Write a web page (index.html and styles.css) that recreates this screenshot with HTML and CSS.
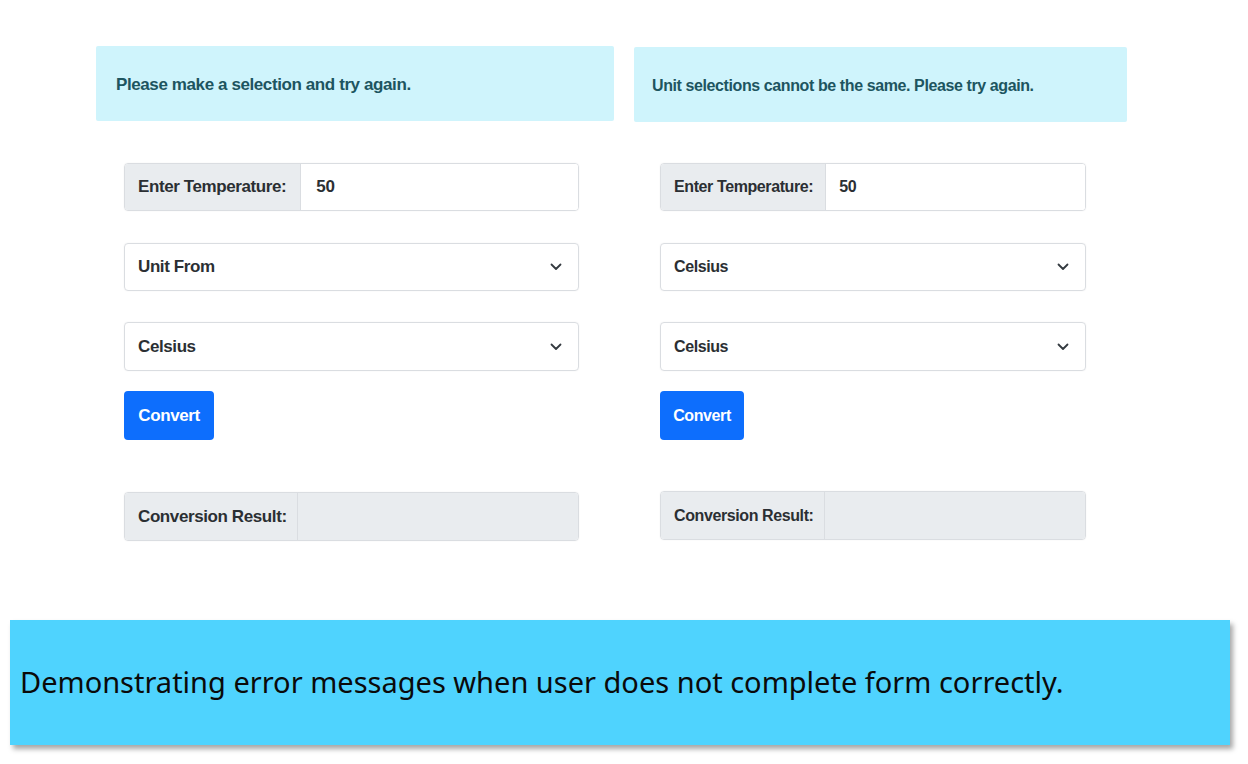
FILE: index.html
```html
<!DOCTYPE html>
<html lang="en">
<head>
<meta charset="utf-8">
<title>Temperature Converter Errors</title>
<link rel="stylesheet" href="styles.css">
</head>
<body>
<div class="page">
  <div class="panels">
    <section class="panel panel-left">
      <div class="alert">Please make a selection and try again.</div>
      <div class="form">
        <div class="group">
          <span class="group-label">Enter Temperature:</span>
          <span class="group-value">50</span>
        </div>
        <div class="select">
          <span>Unit From</span>
          <svg class="chev" width="12" height="8" viewBox="0 0 12 8"><polyline points="1.5,1.5 6,6 10.5,1.5" fill="none" stroke="#343a40" stroke-width="1.8" stroke-linecap="round" stroke-linejoin="round"/></svg>
        </div>
        <div class="select select-second">
          <span>Celsius</span>
          <svg class="chev" width="12" height="8" viewBox="0 0 12 8"><polyline points="1.5,1.5 6,6 10.5,1.5" fill="none" stroke="#343a40" stroke-width="1.8" stroke-linecap="round" stroke-linejoin="round"/></svg>
        </div>
        <button class="btn">Convert</button>
        <div class="group group-result">
          <span class="group-label">Conversion Result:</span>
          <span class="group-value readonly"></span>
        </div>
      </div>
    </section>
    <section class="panel panel-right">
      <div class="alert">Unit selections cannot be the same. Please try again.</div>
      <div class="form">
        <div class="group">
          <span class="group-label">Enter Temperature:</span>
          <span class="group-value">50</span>
        </div>
        <div class="select">
          <span>Celsius</span>
          <svg class="chev" width="12" height="8" viewBox="0 0 12 8"><polyline points="1.5,1.5 6,6 10.5,1.5" fill="none" stroke="#343a40" stroke-width="1.8" stroke-linecap="round" stroke-linejoin="round"/></svg>
        </div>
        <div class="select select-second">
          <span>Celsius</span>
          <svg class="chev" width="12" height="8" viewBox="0 0 12 8"><polyline points="1.5,1.5 6,6 10.5,1.5" fill="none" stroke="#343a40" stroke-width="1.8" stroke-linecap="round" stroke-linejoin="round"/></svg>
        </div>
        <button class="btn">Convert</button>
        <div class="group group-result">
          <span class="group-label">Conversion Result:</span>
          <span class="group-value readonly"></span>
        </div>
      </div>
    </section>
  </div>
  <div class="caption">Demonstrating error messages when user does not complete form correctly.</div>
</div>
</body>
</html>
```

FILE: styles.css
```css
* { box-sizing: border-box; }
html, body { margin: 0; padding: 0; background: #ffffff; }
body {
  width: 1248px;
  height: 764px;
  overflow: hidden;
  font-family: "Liberation Sans", Arial, sans-serif;
}
.page {
  display: flex;
  flex-direction: column;
  padding-top: 46px;
}
.panels {
  display: flex;
  padding-left: 96px;
  gap: 20px;
}
.panel { display: flex; flex-direction: column; }
.panel-left { width: 518px; font-size: 17px; }
.panel-right { width: 493px; font-size: 16px; }
.alert {
  height: 75px;
  background: #cff4fc;
  color: #1d5560;
  font-weight: bold;
  letter-spacing: -0.4px;
  display: flex;
  align-items: center;
  padding-left: 20px;
  padding-top: 2px;
  border-radius: 2px;
}
.panel-right .alert { padding-left: 18px; margin-top: 1px; }
.form {
  display: flex;
  flex-direction: column;
  margin-top: 42px;
  color: #2b2f33;
  font-weight: bold;
  letter-spacing: -0.4px;
}
.panel-left .form { margin-left: 28px; width: 455px; }
.panel-right .form { margin-left: 26px; width: 426px; margin-top: 41px; }
.group {
  display: flex;
  height: 48px;
  border: 1px solid #dadde1;
  border-radius: 4px;
  overflow: hidden;
  box-shadow: 0 0 2px rgba(0,0,0,0.06);
}
.group-label {
  background: #e9ecef;
  display: flex;
  align-items: center;
  padding: 0 14px 0 13px;
  border-right: 1px solid #dadde1;
  white-space: nowrap;
}
.panel-right .group-label { padding-right: 12px; }
.group-result .group-label { padding-right: 10px; }
.group-value {
  flex: 1;
  display: flex;
  align-items: center;
  padding-left: 15px;
  background: #fff;
}
.panel-right .group-value { padding-left: 13px; }
.group-value.readonly { background: #e9ecef; }
.select {
  margin-top: 32px;
  height: 48px;
  border: 1px solid #dadde1;
  border-radius: 4px;
  display: flex;
  align-items: center;
  justify-content: space-between;
  padding: 0 16px 0 13px;
  box-shadow: 0 0 2px rgba(0,0,0,0.06);
}
.select-second { margin-top: 31px; height: 49px; }
.chev { display: block; }
.btn {
  align-self: flex-start;
  margin-top: 20px;
  height: 49px;
  padding: 0;
  background: #0d6efd;
  color: #fff;
  border: none;
  border-radius: 4px;
  font-family: inherit;
  font-size: inherit;
  font-weight: bold;
  letter-spacing: -0.4px;
}
.panel-left .btn { width: 90px; }
.panel-right .btn { width: 84px; }
.group-result { margin-top: 52px; height: 49px; }
.panel-right .group-result { margin-top: 51px; }
.caption {
  margin: 79px 0 0 10px;
  width: 1220px;
  height: 125px;
  background: #4fd3fe;
  box-shadow: 3px 4px 5px rgba(0,0,0,0.35);
  display: flex;
  align-items: center;
  padding-left: 10px;
  padding-bottom: 2px;
  font-family: "Noto Sans", "Open Sans", sans-serif;
  font-size: 29px;
  color: #0a0a0a;
}
```
